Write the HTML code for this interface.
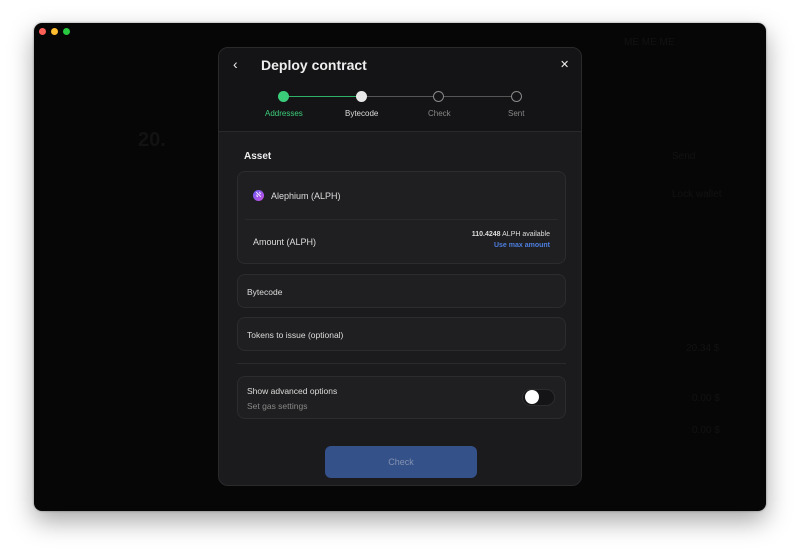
<!DOCTYPE html>
<html><head><style>
*{box-sizing:border-box;margin:0;padding:0}
body{width:800px;height:556px;background:#fff;position:relative;font-family:"Liberation Sans",sans-serif;overflow:hidden}
.win{position:absolute;left:34px;top:23px;width:732px;height:488px;background:#060606;border-radius:8px;box-shadow:0 10px 25px rgba(0,0,0,.35),0 0 2px rgba(0,0,0,.4)}
.dot{position:absolute;top:5px;width:7px;height:7px;border-radius:50%}
.f{position:absolute;color:#121212;font-size:10px}
.modal{position:absolute;left:218px;top:47px;width:364px;height:439px;background:#1b1b1d;border-radius:10px;border:1px solid #2a2a2d;overflow:hidden}
.head{position:absolute;left:0;top:0;width:100%;height:84px;background:#141416;border-bottom:1px solid #2a2a2d}
.t{position:absolute;color:#eee}
.card{position:absolute;left:18px;width:329px;background:#1f1f21;border:1px solid #2c2c2f;border-radius:8px}
.lbl{position:absolute;font-size:9px;color:#ddd}
</style></head><body>
<div class="win">
 <div class="dot" style="left:5px;background:#fe5f57"></div>
 <div class="dot" style="left:17px;background:#febc2e"></div>
 <div class="dot" style="left:29px;background:#28c840"></div>
 <div class="f" style="left:104px;top:106px;font-size:20px;font-weight:bold">20.</div>
 <div class="f" style="left:638px;top:128px">Send</div>
 <div class="f" style="left:638px;top:166px">Lock wallet</div>
 <div class="f" style="left:652px;top:320px">20.34 $</div>
 <div class="f" style="left:658px;top:370px">0.00 $</div>
 <div class="f" style="left:658px;top:402px">0.00 $</div>
 <div class="f" style="left:590px;top:14px">ME ME ME</div>
</div>
<div class="modal">
 <div class="head">
  <div class="t" style="left:14px;top:8px;font-size:14px">‹</div>
  <div class="t" style="left:42px;top:9px;font-size:14px;font-weight:bold">Deploy contract</div>
  <div class="t" style="left:341px;top:10px;font-size:11px">✕</div>
  <div style="position:absolute;left:64px;top:48px;width:78px;height:1px;background:#2fb167"></div>
  <div style="position:absolute;left:142px;top:48px;width:155px;height:1px;background:#555"></div>
  <div style="position:absolute;left:59px;top:43px;width:11px;height:11px;border-radius:50%;background:#3ccd7b"></div>
  <div style="position:absolute;left:137px;top:43px;width:11px;height:11px;border-radius:50%;background:#e8e8e8"></div>
  <div style="position:absolute;left:214px;top:43px;width:11px;height:11px;border-radius:50%;border:1.5px solid #888;background:#141416"></div>
  <div style="position:absolute;left:292px;top:43px;width:11px;height:11px;border-radius:50%;border:1.5px solid #888;background:#141416"></div>
  <div class="lbl" style="left:46px;top:61px;color:#3ccd7b;font-size:8px">Addresses</div>
  <div class="lbl" style="left:126px;top:61px;font-size:8px">Bytecode</div>
  <div class="lbl" style="left:209px;top:61px;color:#888;font-size:8px">Check</div>
  <div class="lbl" style="left:289px;top:61px;color:#888;font-size:8px">Sent</div>
 </div>
 <div class="t" style="left:25px;top:103px;font-size:10px;font-weight:bold">Asset</div>
 <div class="card" style="top:123px;height:93px">
  <div style="position:absolute;left:15px;top:18px;width:11px;height:11px;border-radius:50%;background:linear-gradient(135deg,#6b5cf5,#c850e0);color:#fff;font-size:7px;text-align:center;line-height:11px">ℵ</div>
  <div class="lbl" style="left:33px;top:19px">Alephium (ALPH)</div>
  <div style="position:absolute;left:7px;top:47px;width:313px;height:1px;background:#2a2a2d"></div>
  <div class="lbl" style="left:15px;top:65px">Amount (ALPH)</div>
  <div class="lbl" style="right:15px;top:59px;font-size:7px"><b>110.4248</b> ALPH available</div>
  <div class="lbl" style="right:15px;top:70px;font-size:7px;color:#4d7fe0;font-weight:bold">Use max amount</div>
 </div>
 <div class="card" style="top:226px;height:34px"><div class="lbl" style="left:9px;top:12px;font-size:8.5px">Bytecode</div></div>
 <div class="card" style="top:269px;height:34px"><div class="lbl" style="left:9px;top:12px;font-size:8.5px">Tokens to issue (optional)</div></div>
 <div style="position:absolute;left:18px;top:315px;width:329px;height:1px;background:#2a2a2d"></div>
 <div class="card" style="top:328px;height:43px">
  <div class="lbl" style="left:9px;top:9px;font-size:8.5px">Show advanced options</div>
  <div class="lbl" style="left:9px;top:24px;font-size:8.5px;color:#888">Set gas settings</div>
  <div style="position:absolute;left:284px;top:12px;width:33px;height:17px;border-radius:9px;background:#141416;border:1px solid #2c2c2f"></div>
  <div style="position:absolute;left:287px;top:13px;width:14px;height:14px;border-radius:50%;background:#fff"></div>
 </div>
 <div style="position:absolute;left:106px;top:398px;width:152px;height:32px;border-radius:6px;background:#34518a;color:#8592b0;font-size:9px;text-align:center;line-height:32px">Check</div>
</div>
</body></html>
